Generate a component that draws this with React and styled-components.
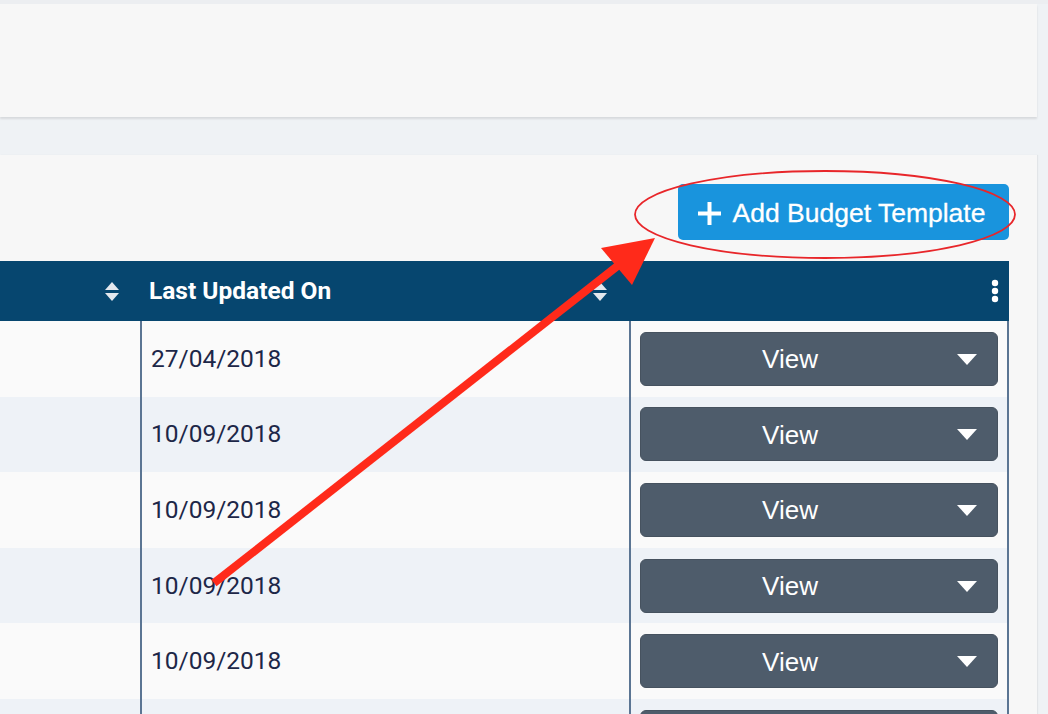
import React from "react";
import styled, { createGlobalStyle } from "styled-components";

const GlobalStyle = createGlobalStyle`
  html, body { margin: 0; padding: 0; }
  body {
    background: #eff2f5;
    overflow: hidden;
    font-family: "Roboto", "Liberation Sans", sans-serif;
  }
`;

const Page = styled.div`
  position: relative;
  width: 1048px;
  height: 714px;
  box-sizing: border-box;
  padding: 4px 11px 0 0;
  display: flex;
  flex-direction: column;
  gap: 38px;
  overflow: hidden;
  background: linear-gradient(#eceef1 0, #eceef1 4px, #eff2f5 4px);
`;

const TopCard = styled.div`
  height: 113px;
  flex: none;
  background: #f7f7f7;
  box-shadow: 0 2px 2px rgba(0, 0, 0, 0.1);
`;

const MainCard = styled.div`
  flex: 1;
  background: #f7f7f7;
  padding: 29px 28px 0 0;
  display: flex;
  flex-direction: column;
  box-shadow: 1px 0 1px rgba(0, 0, 0, 0.05);
`;

const Toolbar = styled.div`
  display: flex;
  justify-content: flex-end;
  margin-bottom: 21px;
`;

const AddButton = styled.button`
  width: 331px;
  height: 56px;
  border: none;
  border-radius: 5px;
  background: #1994dd;
  color: #ffffff;
  font-family: "Liberation Sans", Arial, sans-serif;
  font-size: 26.5px;
  display: flex;
  align-items: center;
  justify-content: center;
  gap: 12px;
  padding: 2px 4px 0 0;
  cursor: pointer;
  -webkit-text-stroke: 0.3px #ffffff;
`;

const Table = styled.div`
  display: grid;
  grid-template-columns: 140px 489px 380px;
`;

const HeadCell = styled.div`
  height: 60px;
  background: #06466f;
  color: #ffffff;
  display: flex;
  align-items: center;
  justify-content: ${(p) => (p.$end ? "flex-end" : "space-between")};
  box-sizing: border-box;
  padding: 0 ${(p) => p.$pr || 0}px 0 ${(p) => p.$pl || 0}px;
  font-family: "Roboto", sans-serif;
  font-weight: 700;
  font-size: 24.5px;
`;

const HeadLabel = styled.span`
  padding-bottom: 2px;
`;

const Cell = styled.div`
  height: 75.6px;
  box-sizing: border-box;
  background: ${(p) => (p.$alt ? "#eef2f7" : "#fafafa")};
  border-left: ${(p) => (p.$line ? "2px solid #5b7593" : "none")};
  border-right: ${(p) => (p.$lineRight ? "2px solid #5b7593" : "none")};
  display: flex;
  align-items: center;
  padding: ${(p) => p.$pad || "0"};
`;

const DateText = styled.span`
  font-family: "Roboto", sans-serif;
  font-size: 24.5px;
  color: #1d2748;
  padding-left: 9px;
  padding-bottom: 1px;
`;

const ViewButton = styled.button`
  flex: 1;
  height: 54px;
  border: 1px solid #46525f;
  border-radius: 6px;
  background: #4e5c6b;
  color: #ffffff;
  font-family: "Liberation Sans", Arial, sans-serif;
  font-size: 26px;
  position: relative;
  display: flex;
  align-items: center;
  justify-content: center;
  padding: 2px 58px 0 0;
  cursor: pointer;
`;

const Caret = styled.span`
  position: absolute;
  right: 20px;
  top: 50%;
  margin-top: -5px;
  width: 0;
  height: 0;
  border-left: 10px solid transparent;
  border-right: 10px solid transparent;
  border-top: 11px solid #ffffff;
`;

const Overlay = styled.svg`
  position: absolute;
  left: 0;
  top: 0;
  pointer-events: none;
`;

const SortIcon = () => (
  <svg width="14" height="19" viewBox="0 0 14 19">
    <path d="M7 0 L14 8 L0 8 Z" fill="#e3e8ee" />
    <path d="M0 11 L14 11 L7 19 Z" fill="#e3e8ee" />
  </svg>
);

const Kebab = () => (
  <svg width="8" height="24" viewBox="0 0 8 24">
    <circle cx="4" cy="4" r="3.2" fill="#ffffff" />
    <circle cx="4" cy="12" r="3.2" fill="#ffffff" />
    <circle cx="4" cy="20" r="3.2" fill="#ffffff" />
  </svg>
);

const PlusIcon = () => (
  <svg width="23" height="23" viewBox="0 0 23 23">
    <rect x="9.5" y="0" width="4" height="23" fill="#ffffff" />
    <rect x="0" y="9.5" width="23" height="4" fill="#ffffff" />
  </svg>
);

const rows = ["27/04/2018", "10/09/2018", "10/09/2018", "10/09/2018", "10/09/2018", "10/09/2018"];

export default function App() {
  return (
    <>
      <GlobalStyle />
      <Page>
        <TopCard />
        <MainCard>
          <Toolbar>
            <AddButton>
              <PlusIcon />
              <span>Add Budget Template</span>
            </AddButton>
          </Toolbar>
          <Table>
            <HeadCell $end $pr={21}>
              <SortIcon />
            </HeadCell>
            <HeadCell $pl={9} $pr={22}>
              <HeadLabel>Last Updated On</HeadLabel>
              <SortIcon />
            </HeadCell>
            <HeadCell $end $pr={10}>
              <Kebab />
            </HeadCell>
            {rows.map((d, i) => (
              <React.Fragment key={i}>
                <Cell $alt={i % 2 === 1} />
                <Cell $alt={i % 2 === 1} $line>
                  <DateText>{d}</DateText>
                </Cell>
                <Cell $alt={i % 2 === 1} $line $lineRight $pad="0 9px 0 9px">
                  <ViewButton>
                    View
                    <Caret />
                  </ViewButton>
                </Cell>
              </React.Fragment>
            ))}
          </Table>
        </MainCard>
        <Overlay width="1048" height="714" viewBox="0 0 1048 714">
          <ellipse cx="825" cy="214.5" rx="190" ry="43.5" fill="none" stroke="#e8262a" strokeWidth="1.8" />
          <line x1="214" y1="583" x2="620" y2="264" stroke="#ff2a1a" strokeWidth="8" />
          <polygon points="655,238 601,248 632,285" fill="#ff2a1a" />
        </Overlay>
      </Page>
    </>
  );
}
